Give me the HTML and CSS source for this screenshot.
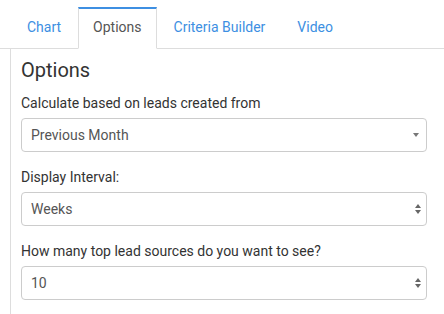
FILE: index.html
```html
<!doctype html>
<html>
<head>
    <title>Lead Sources Options</title>
    <link rel="stylesheet" href="styles.css">
</head>
<body>

<ul class="tabs">
    <li class="tab"><a href="#">Chart</a></li>
    <li class="tab active"><a href="#">Options</a></li>
    <li class="tab"><a href="#">Criteria Builder</a></li>
    <li class="tab"><a href="#">Video</a></li>
</ul>

<div class="pane">
    <h3 class="pane-title">Options</h3>

    <div class="field">
        <label class="field-label">Calculate based on leads created from</label>
        <div class="select-wrap dropdown">
            <select class="select">
                <option>Previous Month</option>
            </select>
        </div>
    </div>

    <div class="field">
        <label class="field-label">Display Interval:</label>
        <div class="select-wrap stepper">
            <select class="select">
                <option>Weeks</option>
            </select>
        </div>
    </div>

    <div class="field">
        <label class="field-label">How many top lead sources do you want to see?</label>
        <div class="select-wrap stepper">
            <select class="select">
                <option>10</option>
            </select>
        </div>
    </div>
</div>

</body>
</html>
```

FILE: styles.css
```css
body {
    margin: 0;
    background: #fff;
    color: #333;
    font-family: Roboto, "Liberation Sans", sans-serif;
    font-size: 14px;
    line-height: 20px;
}

.tabs {
    display: flex;
    list-style: none;
    margin: 7px 0 0 0;
    padding: 0 0 0 12px;
    border-bottom: 1px solid #ddd;
}
.tab {
    margin-right: 2px;
    margin-bottom: -1px;
}
.tab a {
    display: block;
    padding: 8px 14px 11px;
    border-top: 2px solid transparent;
    border-left: 1px solid transparent;
    border-right: 1px solid transparent;
    border-bottom: 1px solid transparent;
    color: #3d8fe2;
    text-decoration: none;
}
.tab.active a {
    color: #555;
    background: #fff;
    border-top-color: #3d8fe2;
    border-left-color: #ddd;
    border-right-color: #ddd;
    border-bottom-color: #fff;
}

.pane {
    box-sizing: border-box;
    height: calc(100vh - 49px);
    margin-left: 10px;
    border-left: 1px solid #ddd;
    padding: 10px 17px 0 10px;
}

.pane-title {
    margin: 0 0 12px 0;
    font-size: 20px;
    line-height: 22px;
    font-weight: 400;
    color: #333;
}

.field {
    margin-bottom: 15px;
}
.field:last-child {
    margin-bottom: 0;
}
.field-label {
    display: block;
    margin-bottom: 5px;
    color: #333;
}

.select-wrap {
    position: relative;
}
.select {
    display: block;
    width: 100%;
    height: 34px;
    margin: 0;
    padding: 0 24px 0 9px;
    border: 1px solid #ccc;
    border-radius: 4px;
    background: #fff;
    color: #555;
    font-family: inherit;
    font-size: 14px;
    -webkit-appearance: none;
    appearance: none;
}

.dropdown::after {
    content: "";
    position: absolute;
    right: 8px;
    top: 15px;
    border-left: 3px solid transparent;
    border-right: 3px solid transparent;
    border-top: 4px solid #777;
}

.stepper::before,
.stepper::after {
    content: "";
    position: absolute;
    right: 6px;
    border-left: 3px solid transparent;
    border-right: 3px solid transparent;
}
.stepper::before {
    top: 12px;
    border-bottom: 4px solid #666;
}
.stepper::after {
    top: 18px;
    border-top: 4px solid #666;
}
```
